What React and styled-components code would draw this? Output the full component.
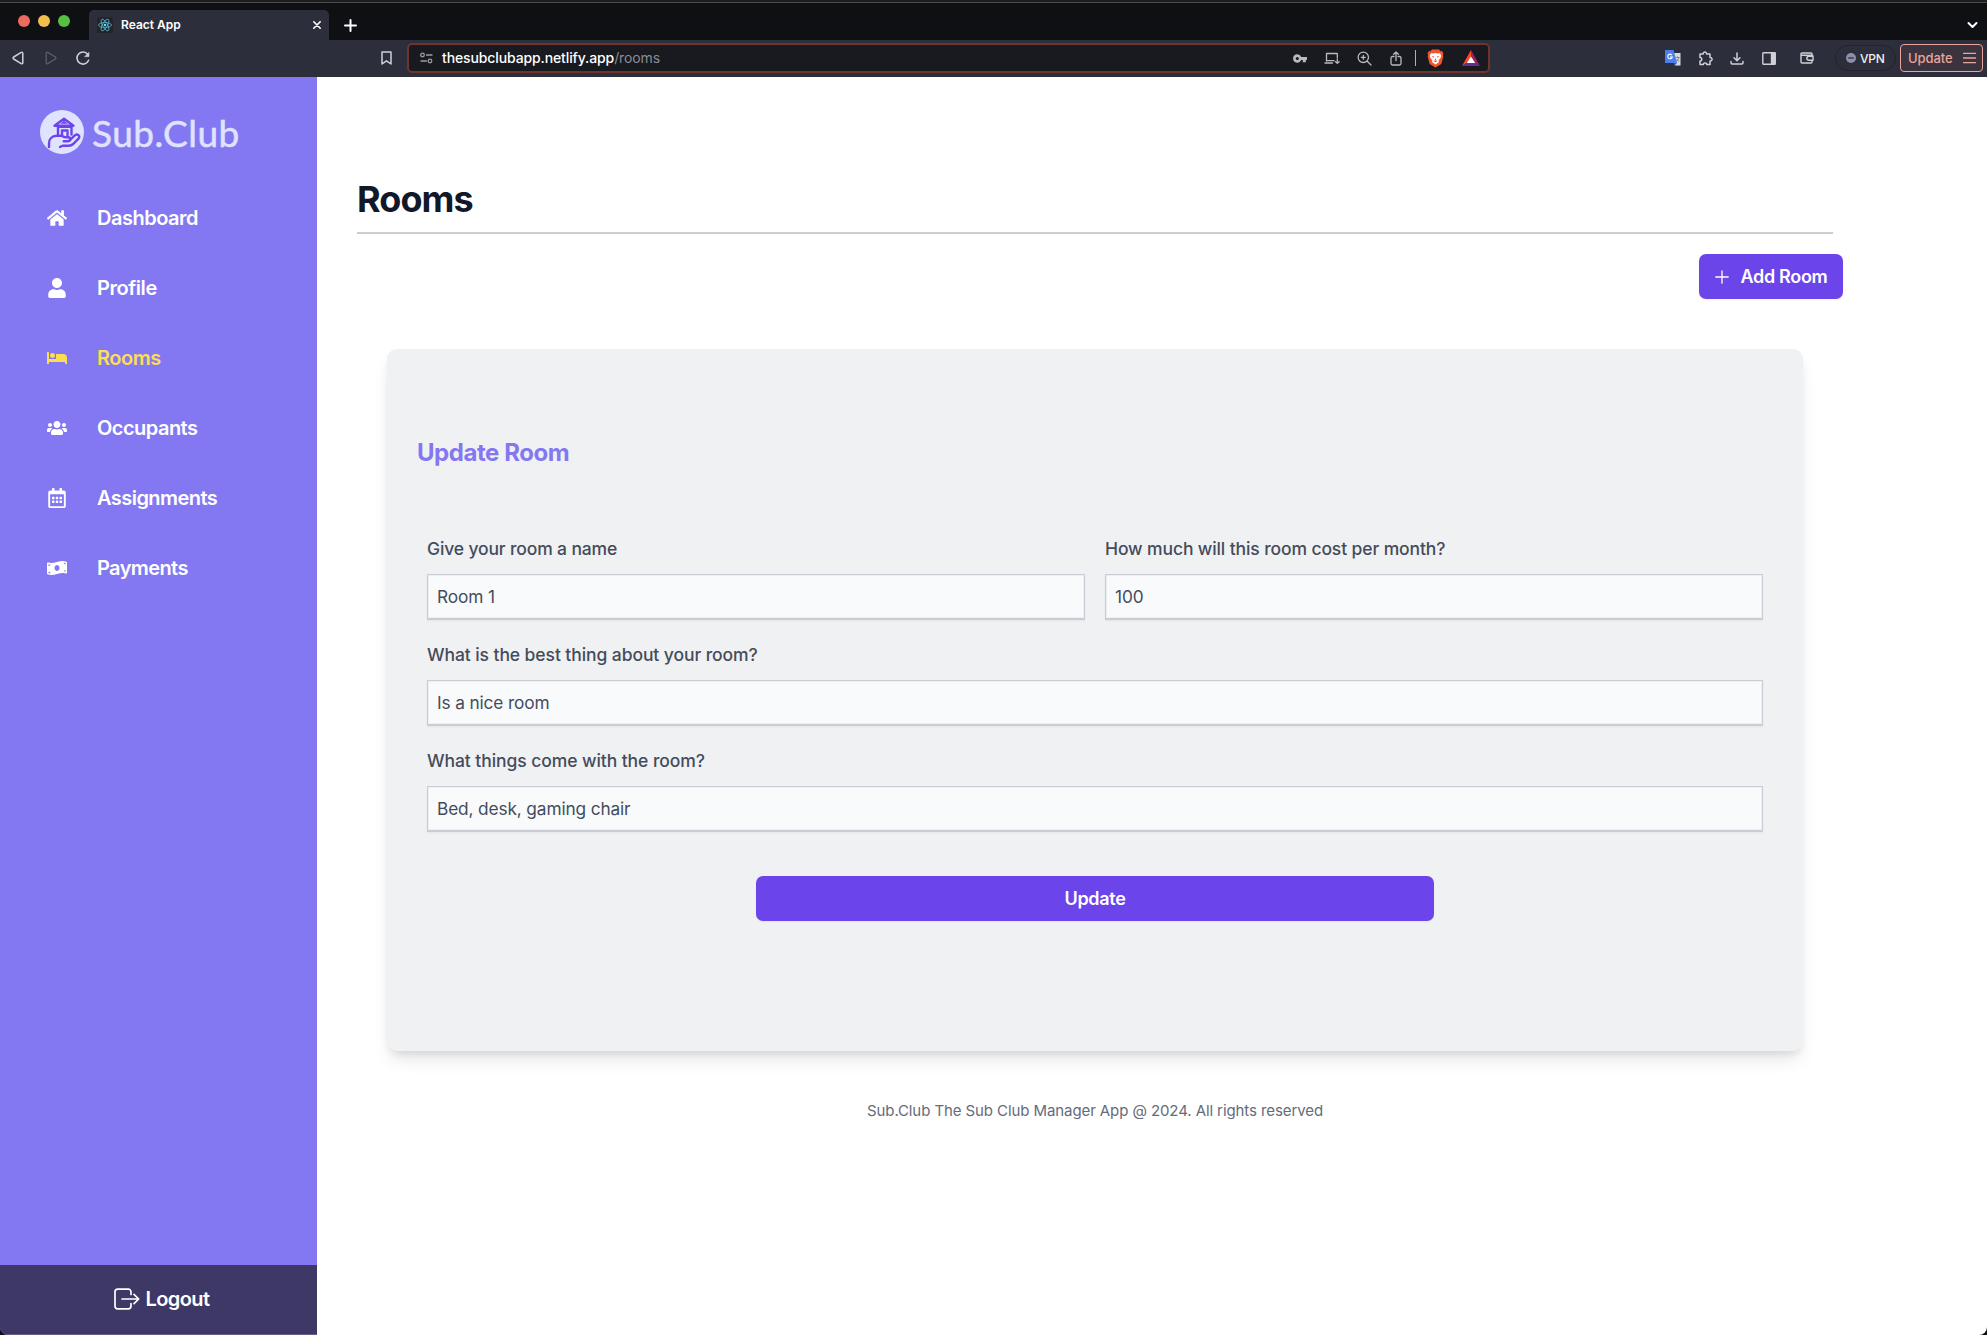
import React from "react";
import styled, { createGlobalStyle } from "styled-components";
import { FaHome, FaUser, FaBed, FaUsers, FaRegCalendarAlt, FaMoneyBillWave } from "react-icons/fa";

const GlobalStyle = createGlobalStyle`
  *, *::before, *::after { box-sizing: border-box; }
  body { margin: 0; overflow: hidden; background: #fff; font-family: Inter, "Liberation Sans", sans-serif; }
  h1, h2, p { margin: 0; }
  svg { display: block; flex: none; }
`;

const Window = styled.div`
  width: 1987px;
  height: 1335px;
  display: flex;
  flex-direction: column;
  overflow: hidden;
  background: #120b12;
`;

/* ---------- browser chrome ---------- */

const TabBar = styled.div`
  height: 40px;
  flex: none;
  display: flex;
  align-items: flex-end;
  padding: 0 9px 0 18px;
  background: #0f1014;
  border-top: 2px solid #1d1d1e;
  box-shadow: inset 0 1px 0 #4b4b4d;
  color: #fff;
`;

const Lights = styled.div`
  display: flex;
  gap: 8px;
  width: 71px;
  padding-bottom: 13px;
`;

const Light = styled.span`
  width: 12px;
  height: 12px;
  border-radius: 50%;
  background: ${(p) => p.$color};
`;

const Tab = styled.div`
  width: 240px;
  height: 30px;
  display: flex;
  align-items: center;
  padding: 0 8px;
  border-radius: 5px 5px 0 0;
  background: #2d2e3b;
  color: #fff;
`;

const TabTitle = styled.span`
  flex: 1;
  margin-left: 8px;
  font-size: 12px;
  font-weight: 600;
  line-height: 16px;
  letter-spacing: 0;
`;

const NewTab = styled.div`
  flex: 1;
  padding: 0 0 8.5px 15px;
`;

const TabMenu = styled.div`
  padding-bottom: 11px;
`;

const Toolbar = styled.div`
  height: 37px;
  flex: none;
  display: flex;
  align-items: center;
  padding: 0 4px 1px 0;
  background: #2d2e3b;
`;

const Slot = styled.span`
  width: ${(p) => p.$w || 32}px;
  height: 22px;
  flex: none;
  display: flex;
  align-items: center;
  justify-content: center;
  color: ${(p) => p.$color || "#cfd0d6"};
`;

const NavButtons = styled.div`
  width: 370px;
  padding-left: 2px;
  display: flex;
`;

const Address = styled.div`
  width: 1083px;
  height: 30px;
  flex: none;
  display: flex;
  align-items: center;
  padding: 0 1px 0 7px;
  border: 2px solid #6e352c;
  border-radius: 5px;
  background: #191a20;
  margin-left: 5px;
`;

const Url = styled.span`
  flex: 1;
  margin-left: 6px;
  font-size: 14px;
  line-height: 20px;
  font-weight: 500;
  letter-spacing: -0.12px;
  color: #fff;
`;

const UrlPath = styled.span`
  font-weight: 400;
  color: #8b8c93;
`;

const Divider = styled.span`
  width: 1px;
  height: 16px;
  background: #b0b1b6;
  margin: 0 1px 0 3px;
`;

const Extensions = styled.div`
  flex: 1;
  display: flex;
  align-items: center;
  justify-content: flex-end;
`;

const Vpn = styled.div`
  width: 61px;
  height: 26px;
  display: flex;
  align-items: center;
  gap: 4px;
  padding-left: 10px;
  margin: 0 4px 0 6px;
  border: 1px solid #22232c;
  border-radius: 13px;
  font-size: 12px;
  font-weight: 500;
  letter-spacing: -0.2px;
  color: #f0f0f2;
`;

const UpdatePill = styled.div`
  width: 83px;
  height: 28px;
  display: flex;
  align-items: center;
  justify-content: space-between;
  padding: 0 6px 0 7px;
  border: 1px solid #e9a49c;
  border-radius: 4px;
  background: #3b333e;
  font-size: 13px;
  font-weight: 500;
  letter-spacing: -0.1px;
  color: #e9a49c;
`;

/* ---------- application ---------- */

const Page = styled.div`
  flex: 1;
  display: flex;
  min-height: 0;
  border-radius: 0 0 8px 8px;
  overflow: hidden;
`;

const Sidebar = styled.aside`
  width: 317px;
  flex: none;
  display: flex;
  flex-direction: column;
  background: #8378f2;
`;

const Brand = styled.div`
  height: 106px;
  display: flex;
  align-items: center;
  padding: 4px 0 0 40px;
`;

const BrandName = styled.span`
  margin-left: 8px;
  padding-top: 2px;
  font-family: Lato, "Open Sans", sans-serif;
  font-size: 37px;
  line-height: 44px;
  letter-spacing: 0.5px;
  color: #e0e3ff;
  -webkit-text-stroke: 0.5px #e0e3ff;
`;

const NavList = styled.nav`
  flex: 1;
  display: flex;
  flex-direction: column;
`;

const NavItem = styled.a`
  height: 70px;
  display: flex;
  align-items: center;
  gap: 30px;
  padding-left: 47px;
  font-size: 20px;
  font-weight: 600;
  line-height: 28px;
  letter-spacing: ${(p) => p.$track}px;
  color: ${(p) => (p.$active ? "#fbdf50" : "#fff")};
`;

const Logout = styled.button`
  height: 70px;
  display: flex;
  align-items: center;
  justify-content: center;
  gap: 6px;
  padding: 0 0 1px 6px;
  border: 0;
  border-bottom: 1px solid #655f8c;
  background: #3d3866;
  color: #fff;
  font: 600 20px/28px Inter, sans-serif;
  letter-spacing: -0.6px;
`;

const Main = styled.main`
  flex: 1;
  display: flex;
  flex-direction: column;
  padding: 96px 144px 0 40px;
  background: #fff;
`;

const PageHeader = styled.header`
  width: 1476px;
  height: 61px;
  border-bottom: 2px solid #c9cdd4;
`;

const Title = styled.h1`
  font-size: 36px;
  line-height: 53px;
  font-weight: 700;
  letter-spacing: -0.95px;
  color: #111827;
`;

const Actions = styled.div`
  display: flex;
  justify-content: flex-end;
  padding-top: 20px;
`;

const Button = styled.button`
  width: ${(p) => p.$w}px;
  height: 45px;
  display: flex;
  align-items: center;
  justify-content: center;
  gap: 12px;
  padding: 0;
  border: 0;
  border-radius: 7px;
  background: #6b45ea;
  box-shadow: 0 1px 2px rgba(0, 0, 0, 0.05);
  color: #fff;
  font: 600 18px/26px Inter, sans-serif;
  letter-spacing: -0.32px;
`;

const Card = styled.section`
  width: 1416px;
  height: 702px;
  margin: 50px 0 0 30px;
  padding: 85px 40px 0;
  border-radius: 10px;
  background: #f0f1f3;
  box-shadow: 0 12px 18px -4px rgba(0, 0, 0, 0.1), 0 5px 8px -3px rgba(0, 0, 0, 0.1);
`;

const CardTitle = styled.h2`
  margin-left: -10px;
  font-size: 24px;
  line-height: 38px;
  font-weight: 700;
  letter-spacing: -0.45px;
  color: #8378f2;
`;

const Form = styled.form`
  display: grid;
  grid-template-columns: 1fr 1fr;
  column-gap: 20px;
  padding-top: 64px;
`;

const Field = styled.label`
  display: flex;
  flex-direction: column;
  grid-column: ${(p) => (p.$wide ? "1 / -1" : "auto")};
  height: 106px;
`;

const LabelText = styled.span`
  height: 38px;
  font-size: 17.5px;
  line-height: 26px;
  font-weight: 500;
  letter-spacing: ${(p) => p.$track}px;
  color: #444c5b;
`;

const Input = styled.input`
  width: 100%;
  height: 46px;
  padding: 0 9px;
  border: 1px solid #cacdd5;
  border-bottom-width: 2px;
  border-radius: 0;
  background: #f9fafc;
  box-shadow: 0 1px 2px rgba(0, 0, 0, 0.05), inset 0 0 0 1px #eeeff3;
  font: 400 17.3px/26px Inter, sans-serif;
  letter-spacing: -0.14px;
  color: #444c5b;
  outline: none;
`;

const SubmitRow = styled.div`
  grid-column: 1 / -1;
  display: flex;
  justify-content: center;
  padding-top: 22px;
`;

const Footer = styled.footer`
  width: 1476px;
  padding-top: 48px;
  text-align: center;
  font-size: 15px;
  line-height: 24px;
  letter-spacing: -0.09px;
  color: #646b7a;
`;

/* ---------- icons ---------- */

const Icon = ({ w = 16, h = w, vb = `0 0 ${w} ${h}`, sw = 1.3, children }) => (
  <svg width={w} height={h} viewBox={vb} fill="none" stroke="currentColor" strokeWidth={sw} strokeLinecap="round" strokeLinejoin="round">
    {children}
  </svg>
);

const ReactFavicon = () => (
  <svg width="16" height="16" viewBox="0 0 16 16">
    <rect width="16" height="16" rx="1.5" fill="#222427" />
    <g fill="none" stroke="#57b4cf" strokeWidth="0.8">
      <ellipse cx="8" cy="8" rx="6.5" ry="2.5" />
      <ellipse cx="8" cy="8" rx="6.5" ry="2.5" transform="rotate(60 8 8)" />
      <ellipse cx="8" cy="8" rx="6.5" ry="2.5" transform="rotate(120 8 8)" />
    </g>
    <circle cx="8" cy="8" r="1.3" fill="#61dafb" />
  </svg>
);

const BrandMark = () => (
  <svg width="44" height="44" viewBox="0 0 44 44">
    <circle cx="22" cy="22" r="22" fill="#e0e3ff" />
    <g fill="none" stroke="#6b45ea" strokeWidth="2.4" strokeLinejoin="round" strokeLinecap="round">
      <path d="M14.5 15.8 24 8.8l9.5 7Z" />
      <path d="M18 16v8M31.5 16v8.5M22 25.5v-5h5.5v5M19.5 16.8h10" />
      <path d="M9 37v-3.500c0-4.500 3-7.700 7.500-7.700h4.300c2 0 3 1.200 4.700 1.400h2.800c2.500 0 2.500 3.500.2 4h-4.800" />
      <path d="M29.500 30.500l5.500-5.300c2.400-1.600 5.400.4 3.700 3.200l-5.500 5.600c-1.300 1.200-2.400 1.700-4.400 1.700h-6.300l-2.500 1.300" />
    </g>
    <path d="M20 13.800 24 10.700l4 3.100Z" fill="#6b45ea" />
  </svg>
);

const LogoutIcon = () => (
  <Icon w={26} h={22} sw={1.7}>
    <path d="M17 6.500V4c0-1.700-1-2.800-2.700-2.800H3.700C2 1.200 1 2.300 1 4v14c0 1.700 1 2.800 2.700 2.800h10.600c1.700 0 2.700-1.100 2.700-2.800v-2.500" />
    <path d="M8 11h16.500M20 6.300l4.700 4.700-4.700 4.700" />
  </Icon>
);

const BraveIcon = () => (
  <svg width="17" height="19" viewBox="0 0 17 19">
    <path d="M5 .5h7l1.600 1.700 1.400-.1 1.500 2.400-.6 1.600.4 1.700-2 7.200L8.500 18.600 2.700 15l-2-7.200.4-1.700-.6-1.600L2 2.100l1.400.1Z" fill="#f1562b" />
    <path d="M4 4.300l2.600.3 1.900-.5 1.900.5 2.600-.3 1.300 2.400-.6 2.100-2.200 2.700.5 1.500-3.500 2.600L5 13l.5-1.500-2.200-2.700-.6-2.100Z" fill="#fff" />
    <path d="M4.700 7l2.500.6-.8 1.100ZM12.300 7l-2.500.6.8 1.100ZM8.500 9l.7 2h-1.400ZM6.400 12l2.100-.7 2.100.7-2.100 1.300Z" fill="#f1562b" />
  </svg>
);

const BatIcon = () => (
  <svg width="18" height="16" viewBox="0 0 18 16">
    <path d="M9 0 0 16 9 10Z" fill="#ff4724" />
    <path d="M9 0 18 16 9 10Z" fill="#9e1f63" />
    <path d="M0 16h18L9 9.500Z" fill="#662d91" />
    <path d="M9 6.500 4.800 13h8.400Z" fill="#fff" />
  </svg>
);

const TranslateIcon = () => (
  <svg width="16" height="16" viewBox="0 0 16 16">
    <path d="M6 3h9.500v12.500H10Z" fill="#d8dadd" />
    <path d="M0 0h8.500l3.500 13H0Z" fill="#4a80ee" />
    <path d="M12 13l-2.500 2.700L8.600 13Z" fill="#2f5fc4" />
    <path d="M7 5.200A2.300 2.300 0 1 0 7.300 7H5" fill="none" stroke="#fff" strokeWidth="1.1" />
    <path d="M10.500 7.500h4M12.500 6.500v1M11 11.500c1.500-1 2.600-2.300 2.800-4M11.600 9l2.400 2.700" fill="none" stroke="#69737c" strokeWidth=".8" />
  </svg>
);

const NAV = [
  { label: "Dashboard", icon: FaHome, track: -0.5 },
  { label: "Profile", icon: FaUser, track: -0.42 },
  { label: "Rooms", icon: FaBed, track: -0.5, active: true },
  { label: "Occupants", icon: FaUsers, track: -0.53 },
  { label: "Assignments", icon: FaRegCalendarAlt, track: -0.55 },
  { label: "Payments", icon: FaMoneyBillWave, track: -0.6 },
];

const FIELDS = [
  { label: "Give your room a name", value: "Room 1", track: -0.14 },
  { label: "How much will this room cost per month?", value: "100", track: -0.11 },
  { label: "What is the best thing about your room?", value: "Is a nice room", wide: true, track: -0.08 },
  { label: "What things come with the room?", value: "Bed, desk, gaming chair", wide: true, track: -0.07 },
];

const BrowserChrome = () => (
  <>
    <TabBar>
      <Lights>
        <Light $color="#ed6a5e" />
        <Light $color="#f4bd4f" />
        <Light $color="#57bf45" />
      </Lights>
      <Tab>
        <ReactFavicon />
        <TabTitle>React App</TabTitle>
        <Icon w={8} sw={1.6}><path d="M.8.8l6.400 6.400M7.200.8.8 7.200" /></Icon>
      </Tab>
      <NewTab>
        <Icon w={13} sw={2}><path d="M6.500 1v11M1 6.500h11" /></Icon>
      </NewTab>
      <TabMenu>
        <Icon w={11} h={8} sw={2}><path d="M1.500 2l4 4 4-4" /></Icon>
      </TabMenu>
    </TabBar>
    <Toolbar>
      <NavButtons>
        <Slot>
          <Icon w={12} h={14} sw={1.5}><path d="M10.800 2.300v9.400c0 1-.8 1.400-1.600.9L1.700 8c-.8-.5-.8-1.500 0-2l7.500-4.600c.8-.5 1.600-.1 1.600.9Z" /></Icon>
        </Slot>
        <Slot $w={33} $color="#5c5d69">
          <Icon w={12} h={14} sw={1.3}><path d="M1.200 2.300v9.400c0 1 .8 1.400 1.600.9L10.300 8c.8-.5.8-1.500 0-2L2.800 1.400c-.8-.5-1.600-.1-1.600.9Z" /></Icon>
        </Slot>
        <Slot>
          <Icon w={14} sw={1.6}>
            <path d="M12.600 9.300A6 6 0 1 1 11.800 3.400" />
            <path d="M13 1.500v4.200H8.800Z" fill="currentColor" strokeWidth=".5" />
          </Icon>
        </Slot>
      </NavButtons>
      <Slot>
        <Icon w={11} h={14} sw={1.5}><path d="M1 1h9v12L5.500 9.800 1 13Z" /></Icon>
      </Slot>
      <Address>
        <Slot $w={20} $color="#9c9da4">
          <Icon w={13} h={12} sw={1.3}>
            <circle cx="2.5" cy="3" r="1.8" /><path d="M6.500 3H12M1 9h5.500" /><circle cx="10" cy="9" r="1.8" />
          </Icon>
        </Slot>
        <Url>thesubclubapp.netlify.app<UrlPath>/rooms</UrlPath></Url>
        <Slot $color="#b9bac0">
          <svg width="14" height="9" viewBox="0 0 14 9" fill="currentColor" fillRule="evenodd">
            <path d="M4.300.2A4.200 4.200 0 0 1 8.200 3H14v3h-1.200v2.300H9.800V6H8.200A4.200 4.200 0 1 1 4.300.2Zm0 2.700a1.600 1.600 0 1 0 0 3.200 1.600 1.600 0 0 0 0-3.200Z" />
          </svg>
        </Slot>
        <Slot $color="#b9bac0">
          <Icon w={16} h={12}><path d="M8.500 11H1M2.500 9V1.500h10.800v4M13.300 7v4.300M11.500 9.700l1.800 1.700 1.800-1.700M2.500 8.700h7.500" /></Icon>
        </Slot>
        <Slot $color="#b9bac0">
          <Icon w={15}><circle cx="6.3" cy="6.3" r="5.2" /><path d="M10.200 10.200l3.800 3.800M6.300 4.300v4M4.300 6.300h4" /></Icon>
        </Slot>
        <Slot $color="#b9bac0">
          <Icon w={12} h={15}><path d="M4 5.500H2.500c-.9 0-1.500.6-1.500 1.500v5.500c0 .9.6 1.500 1.500 1.500h7c.9 0 1.500-.6 1.500-1.500V7c0-.9-.6-1.500-1.500-1.500H8M6 9.500V1.200M3.600 3.300 6 1l2.400 2.300" /></Icon>
        </Slot>
        <Divider />
        <Slot $w={37}><BraveIcon /></Slot>
        <Slot $w={33}><BatIcon /></Slot>
      </Address>
      <Extensions>
        <Slot><TranslateIcon /></Slot>
        <Slot>
          <Icon w={15} sw={1.5}>
            <path d="M2 3h3.200c-.3-2.600 3.600-2.600 3.300 0H12v3.500c2.700-.3 2.700 3.700 0 3.400V13.600H8.700c.2-2.300-3.500-2.300-3.300 0H2v-3.500c2.400.2 2.400-3.700 0-3.500Z" />
          </Icon>
        </Slot>
        <Slot>
          <Icon w={14} h={13} sw={1.5}><path d="M7 1v7.500M4 5.700l3 3 3-3M1 9.500v1.300c0 .8.400 1.200 1.200 1.200h9.600c.8 0 1.200-.4 1.200-1.200V9.500" /></Icon>
        </Slot>
        <Slot>
          <Icon w={14} h={13} sw={1.4}><rect x=".8" y=".8" width="12.4" height="11.4" rx=".6" /><path d="M9.500 1H13v11H9.500Z" fill="currentColor" /></Icon>
        </Slot>
        <Slot $w={44}>
          <Icon w={14} h={12} sw={1.4}><path d="M12 3.500V2c0-.7-.4-1-1-1H2C1.300 1 1 1.400 1 2v8c0 .7.400 1 1 1h9c.7 0 1-.4 1-1V9M1.300 3.300h11.400" /><path d="M13 4.300H9c-1.500 0-2.200.8-2.200 1.900S7.500 8.200 9 8.200h4Z" /></Icon>
        </Slot>
        <Vpn>
          <svg width="10" height="10" viewBox="0 0 10 10"><circle cx="5" cy="5" r="5" fill="#8d8fa8" /><path d="M2.300 5h5.400" stroke="#2d2e3b" strokeWidth="1.3" /></svg>
          VPN
        </Vpn>
        <UpdatePill>
          Update
          <Icon w={13} h={12} sw={1.3}><path d="M.5 1.300h12M.5 6h12M.5 10.700h12" /></Icon>
        </UpdatePill>
      </Extensions>
    </Toolbar>
  </>
);

export default function App() {
  return (
    <Window>
      <GlobalStyle />
      <BrowserChrome />
      <Page>
        <Sidebar>
          <Brand>
            <BrandMark />
            <BrandName>Sub.Club</BrandName>
          </Brand>
          <NavList>
            {NAV.map(({ label, icon: Glyph, track, active }) => (
              <NavItem key={label} $active={active} $track={track}>
                <Glyph size={20} />
                {label}
              </NavItem>
            ))}
          </NavList>
          <Logout>
            <LogoutIcon />
            Logout
          </Logout>
        </Sidebar>
        <Main>
          <PageHeader>
            <Title>Rooms</Title>
          </PageHeader>
          <Actions>
            <Button $w={144}>
              <Icon w={14} sw={1.3}><path d="M7 .8v12.400M.8 7h12.400" /></Icon>
              Add Room
            </Button>
          </Actions>
          <Card>
            <CardTitle>Update Room</CardTitle>
            <Form>
              {FIELDS.map(({ label, value, wide, track }) => (
                <Field key={label} $wide={wide}>
                  <LabelText $track={track}>{label}</LabelText>
                  <Input defaultValue={value} />
                </Field>
              ))}
              <SubmitRow>
                <Button type="button" $w={678}>Update</Button>
              </SubmitRow>
            </Form>
          </Card>
          <Footer>Sub.Club The Sub Club Manager App @ 2024. All rights reserved</Footer>
        </Main>
      </Page>
    </Window>
  );
}
